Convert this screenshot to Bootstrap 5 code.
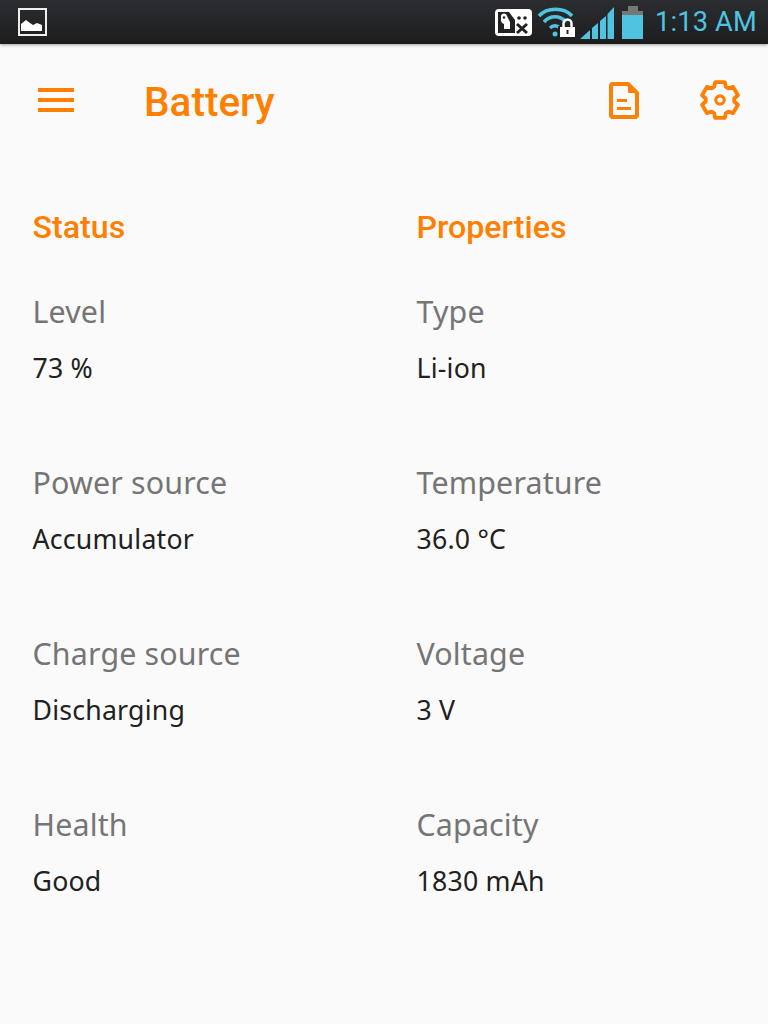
<!DOCTYPE html>
<html lang="en">
<head>
    <meta charset="UTF-8">
    <meta name="viewport" content="width=device-width, initial-scale=1.0">
    <title>Battery</title>
    <link href="https://cdn.jsdelivr.net/npm/bootstrap@5.3.2/dist/css/bootstrap.min.css" rel="stylesheet">
    <style>
        body { background: #fafafa; font-family: "Noto Sans", sans-serif; height: 1024px; overflow: hidden; }
        .status-strip { height: 44px; background: linear-gradient(#2b2d30, #1c1d1f); box-shadow: 0 1px 3px rgba(0,0,0,.35); padding: 0 11px 0 17px; color: #4fc3e0; }
        .status-gap { margin-left: 5px; }
        .battery-gap { margin-left: 8px; }
        .clock { font-family: "Roboto", sans-serif; font-size: 27.2px; line-height: 44px; margin-left: 12px; letter-spacing: .2px; }
        .top-bar { height: 116px; padding: 0 27px 0 38px; color: #ff7f00; }
        .menu-icon { margin-bottom: 4px; }
        .app-title { font-family: "Roboto", sans-serif; font-weight: 500; font-size: 40.5px; line-height: 1; margin: 0 0 0 70px; }
        .top-icons { color: #ff7f00; margin-bottom: 4px; }
        .gear-icon { margin-left: 60px; }
        .info-cols { margin: 0; }
        .info-cols > div { padding: 0 0 0 32.5px; }
        .group-title { font-family: "Roboto", sans-serif; font-weight: 500; font-size: 32.2px; line-height: 34px; color: #ff7f00; margin: 50px 0 51px; }
        .info-item { height: 171px; }
        .info-label { font-size: 30.4px; line-height: 34px; color: #757575; margin-bottom: 22px; letter-spacing: .15px; }
        .info-value { font-size: 26.7px; line-height: 34px; color: #212121; letter-spacing: .2px; }
    </style>
</head>
<body>
    <div class="status-strip d-flex align-items-center">
        <svg width="30" height="30" viewBox="0 0 30 30" fill="none">
            <rect x="2" y="2" width="27" height="26" stroke="#eee" stroke-width="2"/>
            <path d="M4 24V17L9 13L13 16L16 18L20 16L25 18V24Z" fill="#fff"/>
        </svg>
        <div class="d-flex align-items-center ms-auto">
            <svg width="37" height="27" viewBox="0 0 37 27">
                <rect x="0" y="0" width="37" height="27" rx="4" fill="#fff"/>
                <path d="M3 3H14L20 11V24H3Z" fill="#222"/>
                <path d="M6 8A3 3 0 0 1 12 7L15 13V20H9V15A4 4 0 0 1 6 12Z" fill="#fff"/>
                <circle cx="9" cy="8.500" r="1.300" fill="#222"/>
                <circle cx="24" cy="9" r="1.800" fill="#222"/>
                <circle cx="30" cy="9" r="1.800" fill="#222"/>
                <path d="M22 15L32 24M32 15L22 24" stroke="#222" stroke-width="3"/>
            </svg>
            <svg class="status-gap" width="38" height="30" viewBox="0 0 38 30" fill="none" stroke="#4fc3e0" stroke-width="3.500">
                <path d="M2 9C10 0 27 0 35 9"/>
                <path d="M7 15C13 8 23 8 29 15"/>
                <path d="M13 21C16 18 20 18 23 21"/>
                <circle cx="18" cy="27" r="2.500" fill="#4fc3e0" stroke="none"/>
                <rect x="21" y="19" width="17" height="11" fill="#1f2022" stroke="none"/>
                <rect x="23" y="20" width="15" height="10" fill="#fff" stroke="none"/>
                <path d="M26.500 20V16.500A4 4 0 0 1 34.500 16.500V20" stroke="#fff" stroke-width="2.500"/>
                <rect x="29.500" y="23" width="2" height="4" fill="#222" stroke="none"/>
            </svg>
            <svg class="status-gap" width="34" height="33" viewBox="0 0 34 33" fill="#4fc3e0">
                <path d="M0 33L10 24V33Z"/>
                <path d="M12 22L18 17V33H12Z"/>
                <path d="M20 15L26 10V33H20Z"/>
                <path d="M27.500 8L34 1V33H27.500Z"/>
            </svg>
            <svg class="battery-gap" width="21" height="33" viewBox="0 0 21 33">
                <rect x="6" y="0" width="10" height="5" fill="#777"/>
                <rect x="0" y="5" width="21" height="4" fill="#777"/>
                <rect x="0" y="9" width="21" height="24" fill="#4fc3e0"/>
            </svg>
            <span class="clock">1:13 AM</span>
        </div>
    </div>

    <div class="top-bar d-flex align-items-center">
        <svg class="menu-icon" width="36" height="24" viewBox="0 0 36 24" fill="#ff7f00">
            <rect x="0" y="0" width="36" height="4"/>
            <rect x="0" y="10" width="36" height="4"/>
            <rect x="0" y="20" width="36" height="4"/>
        </svg>
        <h1 class="app-title">Battery</h1>
        <div class="top-icons d-flex align-items-center ms-auto">
            <svg width="30" height="37" viewBox="0 0 30 37" fill="none" stroke="currentColor" stroke-width="4" stroke-linejoin="round">
                <path d="M2 4A2 2 0 0 1 4 2H19L28 11V33A2 2 0 0 1 26 35H4A2 2 0 0 1 2 33Z"/>
                <path d="M20 3V10H27Z" fill="currentColor" stroke-width="2"/>
                <path d="M8 18.500H18M8 26.500H22" stroke-width="3"/>
            </svg>
            <svg class="gear-icon" width="42" height="42" viewBox="-12 -12 24 24" fill="none" stroke="currentColor" stroke-width="2.200" stroke-linejoin="round">
                <circle cx="0" cy="0" r="2.400" stroke-width="1.800"/>
                <path d="M-2.740 -10.240L2.740 -10.240L3.340 -7.490L4.820 -6.630L7.500 -7.500L10.240 -2.740L8.160 -.86L8.160 .86L10.240 2.740L7.500 7.500L4.820 6.630L3.340 7.490L2.740 10.240L-2.740 10.240L-3.340 7.490L-4.820 6.630L-7.500 7.500L-10.240 2.740L-8.160 .86L-8.160 -.86L-10.240 -2.740L-7.500 -7.500L-4.820 -6.630L-3.340 -7.490Z"/>
            </svg>
        </div>
    </div>

    <div class="row info-cols">
        <div class="col-6">
            <h2 class="group-title">Status</h2>
            <div class="info-item"><div class="info-label">Level</div><div class="info-value">73 %</div></div>
            <div class="info-item"><div class="info-label">Power source</div><div class="info-value">Accumulator</div></div>
            <div class="info-item"><div class="info-label">Charge source</div><div class="info-value">Discharging</div></div>
            <div class="info-item"><div class="info-label">Health</div><div class="info-value">Good</div></div>
        </div>
        <div class="col-6">
            <h2 class="group-title">Properties</h2>
            <div class="info-item"><div class="info-label">Type</div><div class="info-value">Li-ion</div></div>
            <div class="info-item"><div class="info-label">Temperature</div><div class="info-value">36.0 °C</div></div>
            <div class="info-item"><div class="info-label">Voltage</div><div class="info-value">3 V</div></div>
            <div class="info-item"><div class="info-label">Capacity</div><div class="info-value">1830 mAh</div></div>
        </div>
    </div>

    <script src="https://cdn.jsdelivr.net/npm/bootstrap@5.3.2/dist/js/bootstrap.bundle.min.js"></script>
</body>
</html>
